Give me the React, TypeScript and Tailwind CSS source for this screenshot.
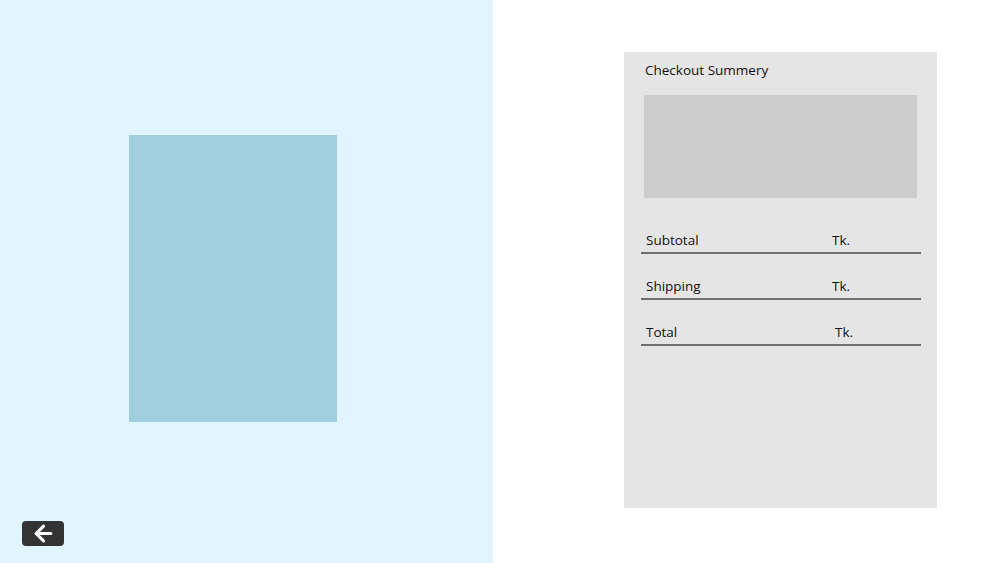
import { ArrowLeft } from "lucide-react"

const rows = [
    { label: "Subtotal", tkOffset: "ml-[186px]" },
    { label: "Shipping", tkOffset: "ml-[186px]" },
    { label: "Total", tkOffset: "ml-[189px]" },
]

export default function App() {
    return (
        <div className="flex w-[986px] h-[563px] bg-white font-['Open_Sans',sans-serif] text-[#111]">
            <div className="w-[493px] h-full bg-[#e0f5fd] flex flex-col pt-[135px] pl-[22px] pb-[17px]">
                <div className="ml-[107px] w-[208px] h-[287px] bg-[#9fcfdc]" />
                <button className="mt-auto w-[42px] h-[25px] rounded-[4px] bg-[#333333] flex items-center justify-center text-white">
                    <ArrowLeft size={25} strokeWidth={3} />
                </button>
            </div>

            <div className="flex-1 pt-[52px] pl-[131px]">
                <div className="w-[313px] h-[456px] bg-[#e5e5e5] pt-[8px] pl-[17px]">
                    <div className="pl-[4px] text-[13.5px] leading-[20px]">Checkout Summery</div>
                    <div className="ml-[3px] mt-[15px] w-[273px] h-[103px] bg-[#cccccc]" />
                    <div className="mt-[32px] flex flex-col gap-[22px] w-[280px]">
                        {rows.map((row) => (
                            <div key={row.label} className="flex pl-[5px] pb-[2px] border-b-2 border-[#707070] text-[13.5px] leading-[20px]">
                                <span className="w-[0px] whitespace-nowrap">{row.label}</span>
                                <span className={row.tkOffset}>Tk.</span>
                            </div>
                        ))}
                    </div>
                </div>
            </div>
        </div>
    )
}
